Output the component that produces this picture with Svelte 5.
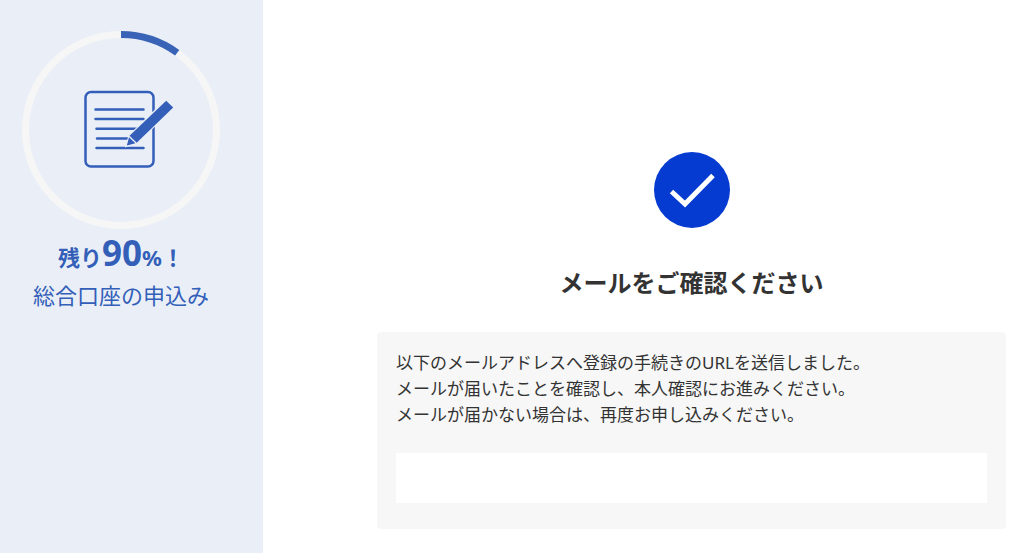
<script lang="ts">
  let { remaining = 90, email = "" }: { remaining?: number; email?: string } = $props();

  const radius = 95.5;
  const circumference = 2 * Math.PI * radius;
  const done = $derived((circumference * (100 - remaining)) / 100);

  const messages = [
    "以下のメールアドレスへ登録の手続きのURLを送信しました。",
    "メールが届いたことを確認し、本人確認にお進みください。",
    "メールが届かない場合は、再度お申し込みください。"
  ];
</script>

<div class="layout">
  <aside class="sidebar">
    <svg class="progress" viewBox="0 0 198 198" aria-hidden="true">
      <circle class="track" cx="99" cy="99" r={radius} />
      <circle
        class="bar"
        cx="99"
        cy="99"
        r={radius}
        stroke-dasharray="{done} {circumference}"
        transform="rotate(-90 99 99)"
      />
      <g class="sheet">
        <rect x="63.5" y="61" width="68" height="74.5" rx="5.5" />
        <path d="M73.5 78.5h48M73.5 88h48M74.5 97.7h42M75 107.4h31M74.5 117h47" />
      </g>
      <path class="pencil-gap" d="M143.7 70l7 6.4-36.4 35.2-9.2 2.6 2.8-9.2z" />
      <path class="pencil" d="M144.2 69.7l7 6.8-36.5 35.2-7.2-7z" />
      <path class="pencil" d="M107 106.2l6.4 6-8.5 2.2z" />
    </svg>
    <p class="remaining">残り<strong>{remaining}</strong>%！</p>
    <p class="step">総合口座の申込み</p>
  </aside>

  <main class="content">
    <svg class="check" viewBox="0 0 76 76" aria-hidden="true">
      <circle cx="38" cy="38" r="38" />
      <path d="M17.5 39.5l13.5 12.5 28-28.5" />
    </svg>
    <h1>メールをご確認ください</h1>

    <section class="panel">
      {#each messages as message (message)}
        <p>{message}</p>
      {/each}
      <input type="email" value={email} aria-label="メールアドレス" readonly />
    </section>
  </main>
</div>

<style>
  :global(body) {
    margin: 0;
    background: #fff;
  }

  .layout {
    display: flex;
    min-height: 100vh;
    font-family: "Noto Sans", "Noto Sans CJK JP", sans-serif;
    color: #333;
  }

  .sidebar {
    flex: 0 0 263px;
    box-sizing: border-box;
    padding: 31px 43px 24px 22px;
    background: #eaeff7;
    color: #345fb9;
    text-align: center;
  }

  .progress {
    display: block;
    width: 100%;
    fill: none;
  }

  .track {
    stroke: #f6f6f6;
    stroke-width: 7;
  }

  .bar {
    stroke: #3963b7;
    stroke-width: 7;
  }

  .sheet {
    stroke: #345fb9;
    stroke-width: 2.5;
    stroke-linecap: round;
  }

  .pencil-gap {
    fill: #eaeff7;
    stroke: #eaeff7;
    stroke-width: 3;
  }

  .pencil {
    fill: #345fb9;
  }

  .sidebar p {
    margin: 0;
    white-space: nowrap;
  }

  .remaining {
    font-size: 22px;
    font-weight: 700;
    line-height: 56px;
  }

  .remaining strong {
    font-size: 35px;
    font-weight: 700;
    line-height: 1;
  }

  .step {
    font-size: 22px;
    font-weight: 400;
    line-height: 20px;
  }

  .content {
    flex: 1;
    min-width: 0;
    display: flex;
    flex-direction: column;
    align-items: center;
    padding: 152px 18px 24px 114px;
  }

  .check {
    width: 76px;
    height: 76px;
    fill: #063bd1;
  }

  .check path {
    fill: none;
    stroke: #fff;
    stroke-width: 5;
  }

  h1 {
    margin: 36px 0 30px;
    font-size: 24px;
    font-weight: 700;
    line-height: 38px;
  }

  .panel {
    align-self: stretch;
    padding: 18px 19px 26px;
    border-radius: 4px;
    background: #f7f7f7;
  }

  .panel p {
    margin: 0;
    font-size: 17px;
    font-weight: 400;
    line-height: 26px;
  }

  .panel input {
    display: block;
    box-sizing: border-box;
    width: 100%;
    height: 50px;
    margin-top: 25px;
    padding: 0 16px;
    border: 0;
    background: #fff;
    font: inherit;
    color: inherit;
  }
</style>
